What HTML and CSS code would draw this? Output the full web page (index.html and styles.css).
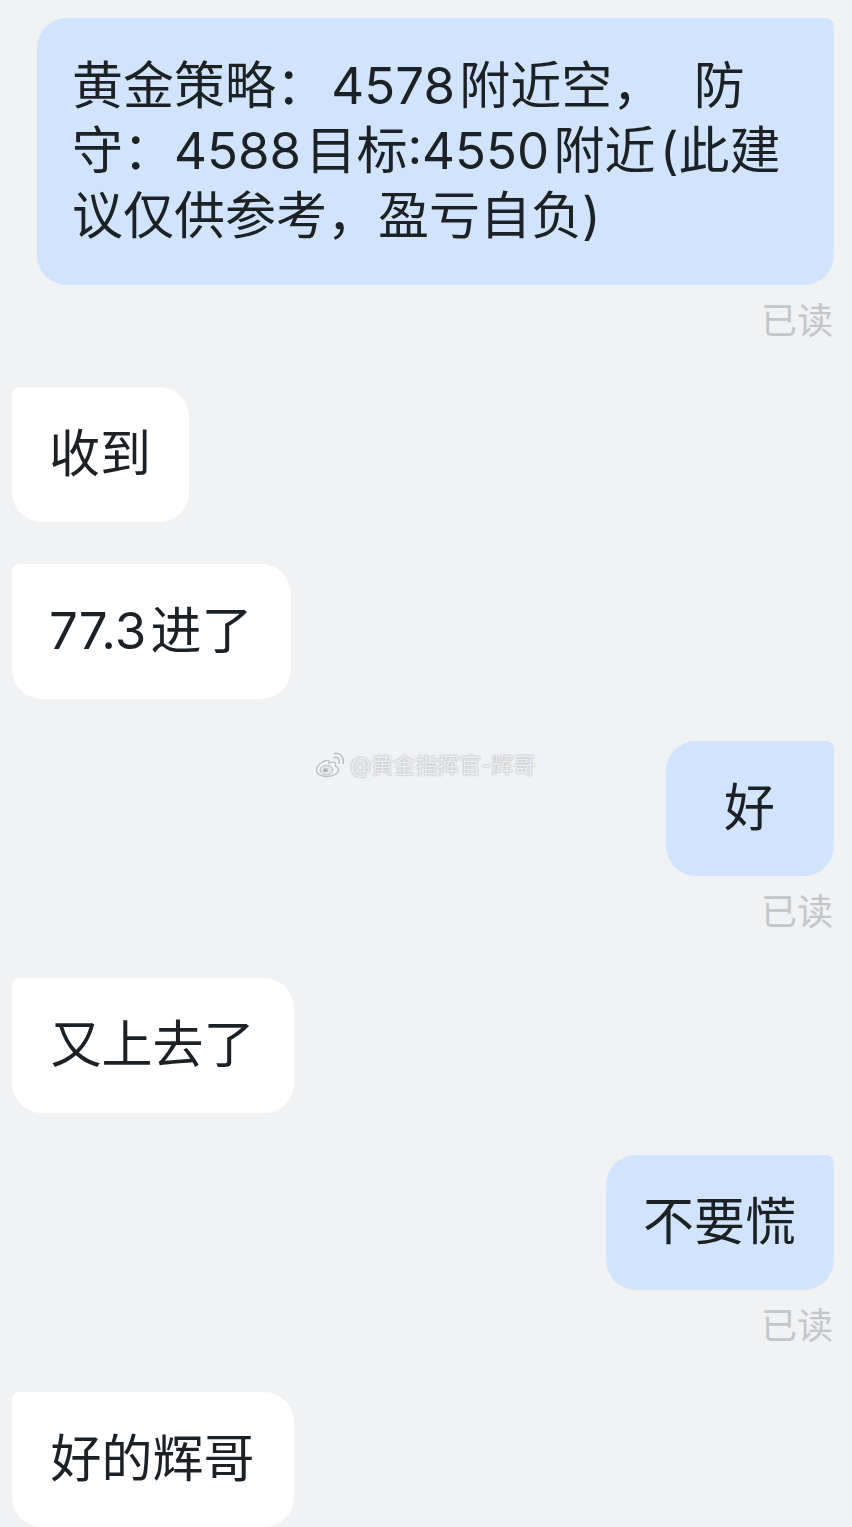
FILE: index.html
```html
<!DOCTYPE html>
<html lang="zh-CN">
<head>
<meta charset="utf-8">
<title>聊天记录</title>
<link rel="stylesheet" href="styles.css">
</head>
<body>
<main class="chat">
  <div class="msg mine">
    <div class="bubble wide">黄金策略： 4578 附近空，&nbsp;&nbsp;&nbsp;&nbsp;&nbsp;&nbsp;&nbsp;防守：4588 目标:4550 附近 (此建议仅供参考，盈亏自负)</div>
    <div class="read">已读</div>
  </div>
  <div class="msg theirs"><div class="bubble">收到</div></div>
  <div class="msg theirs"><div class="bubble">77.3 进了</div></div>
  <div class="msg mine">
    <div class="bubble">好</div>
    <div class="read">已读</div>
  </div>
  <div class="msg theirs"><div class="bubble four">又上去了</div></div>
  <div class="msg mine">
    <div class="bubble">不要慌</div>
    <div class="read">已读</div>
  </div>
  <div class="msg theirs"><div class="bubble four">好的辉哥</div></div>
</main>
<div class="watermark">
  <svg class="weibo" viewBox="0 0 30 26" width="30" height="26" aria-hidden="true">
    <path d="M12 8.500C6.500 9.500 1.500 14 1.500 18c0 4 5 6.500 10.500 6.500 6.500 0 11.500-3.500 11.500-7 0-2-1.800-3-3.300-3.500.8-2 .3-3.500-1.700-3.800-1.800-.2-3.500.5-4.500 1 .4-2 0-3.200-2-2.700z" fill="#f7f8f9" stroke="#b9bcc0" stroke-width="1.300"/>
    <ellipse cx="11.500" cy="18" rx="6.500" ry="4.800" fill="#e4e6e8" stroke="#b9bcc0"/>
    <ellipse cx="10.500" cy="18.300" rx="2.400" ry="2" fill="#aeb1b5"/>
    <path d="M19 5.500c3.500-.8 6 1.800 5 5.500M19.500 1.500c6-1 10 4 8.500 10" fill="none" stroke="#b9bcc0" stroke-width="1.500" stroke-linecap="round"/>
  </svg>
  <span class="mark-text">@黄金指挥官-辉哥</span>
</div>
</body>
</html>
```
FILE: styles.css
```css
* { box-sizing: border-box; }
html, body { margin: 0; height: 1527px; overflow: hidden; background: #f0f2f4; }
body { position: relative; font-family: "Inter", "Noto Sans CJK SC", sans-serif; color: #1c2126; }
.chat { display: flex; flex-direction: column; gap: 42px; padding: 18px 18px 0 12px; }
.msg { display: flex; flex-direction: column; }
.mine { align-items: flex-end; }
.theirs { align-items: flex-start; }
.bubble {
  min-width: 168px;
  padding: 34px 38px 36px 37px;
  font-size: 51px;
  line-height: 65px;
  text-align: center;
  word-spacing: -10px;
  background: #fff;
  border-radius: 8px 30px 30px 30px;
}
.mine .bubble { background: #d2e4fd; border-radius: 30px 8px 30px 30px; }
.bubble.four { min-width: 282px; }
.bubble.wide { width: 797px; padding: 35px 35px 37px; text-align: left; }
.read { margin: 15px 1px 3px 0; font-size: 36px; line-height: 42px; color: #c3c6ca; }
.watermark {
  position: absolute; left: 315px; top: 751px; display: flex; align-items: center; gap: 5px;
  color: #eceef0; font-size: 22px; line-height: 28px;
  text-shadow: 0 0 2px #9a9da2;
}
.weibo { display: block; }
.mark-text { white-space: nowrap; }
```
